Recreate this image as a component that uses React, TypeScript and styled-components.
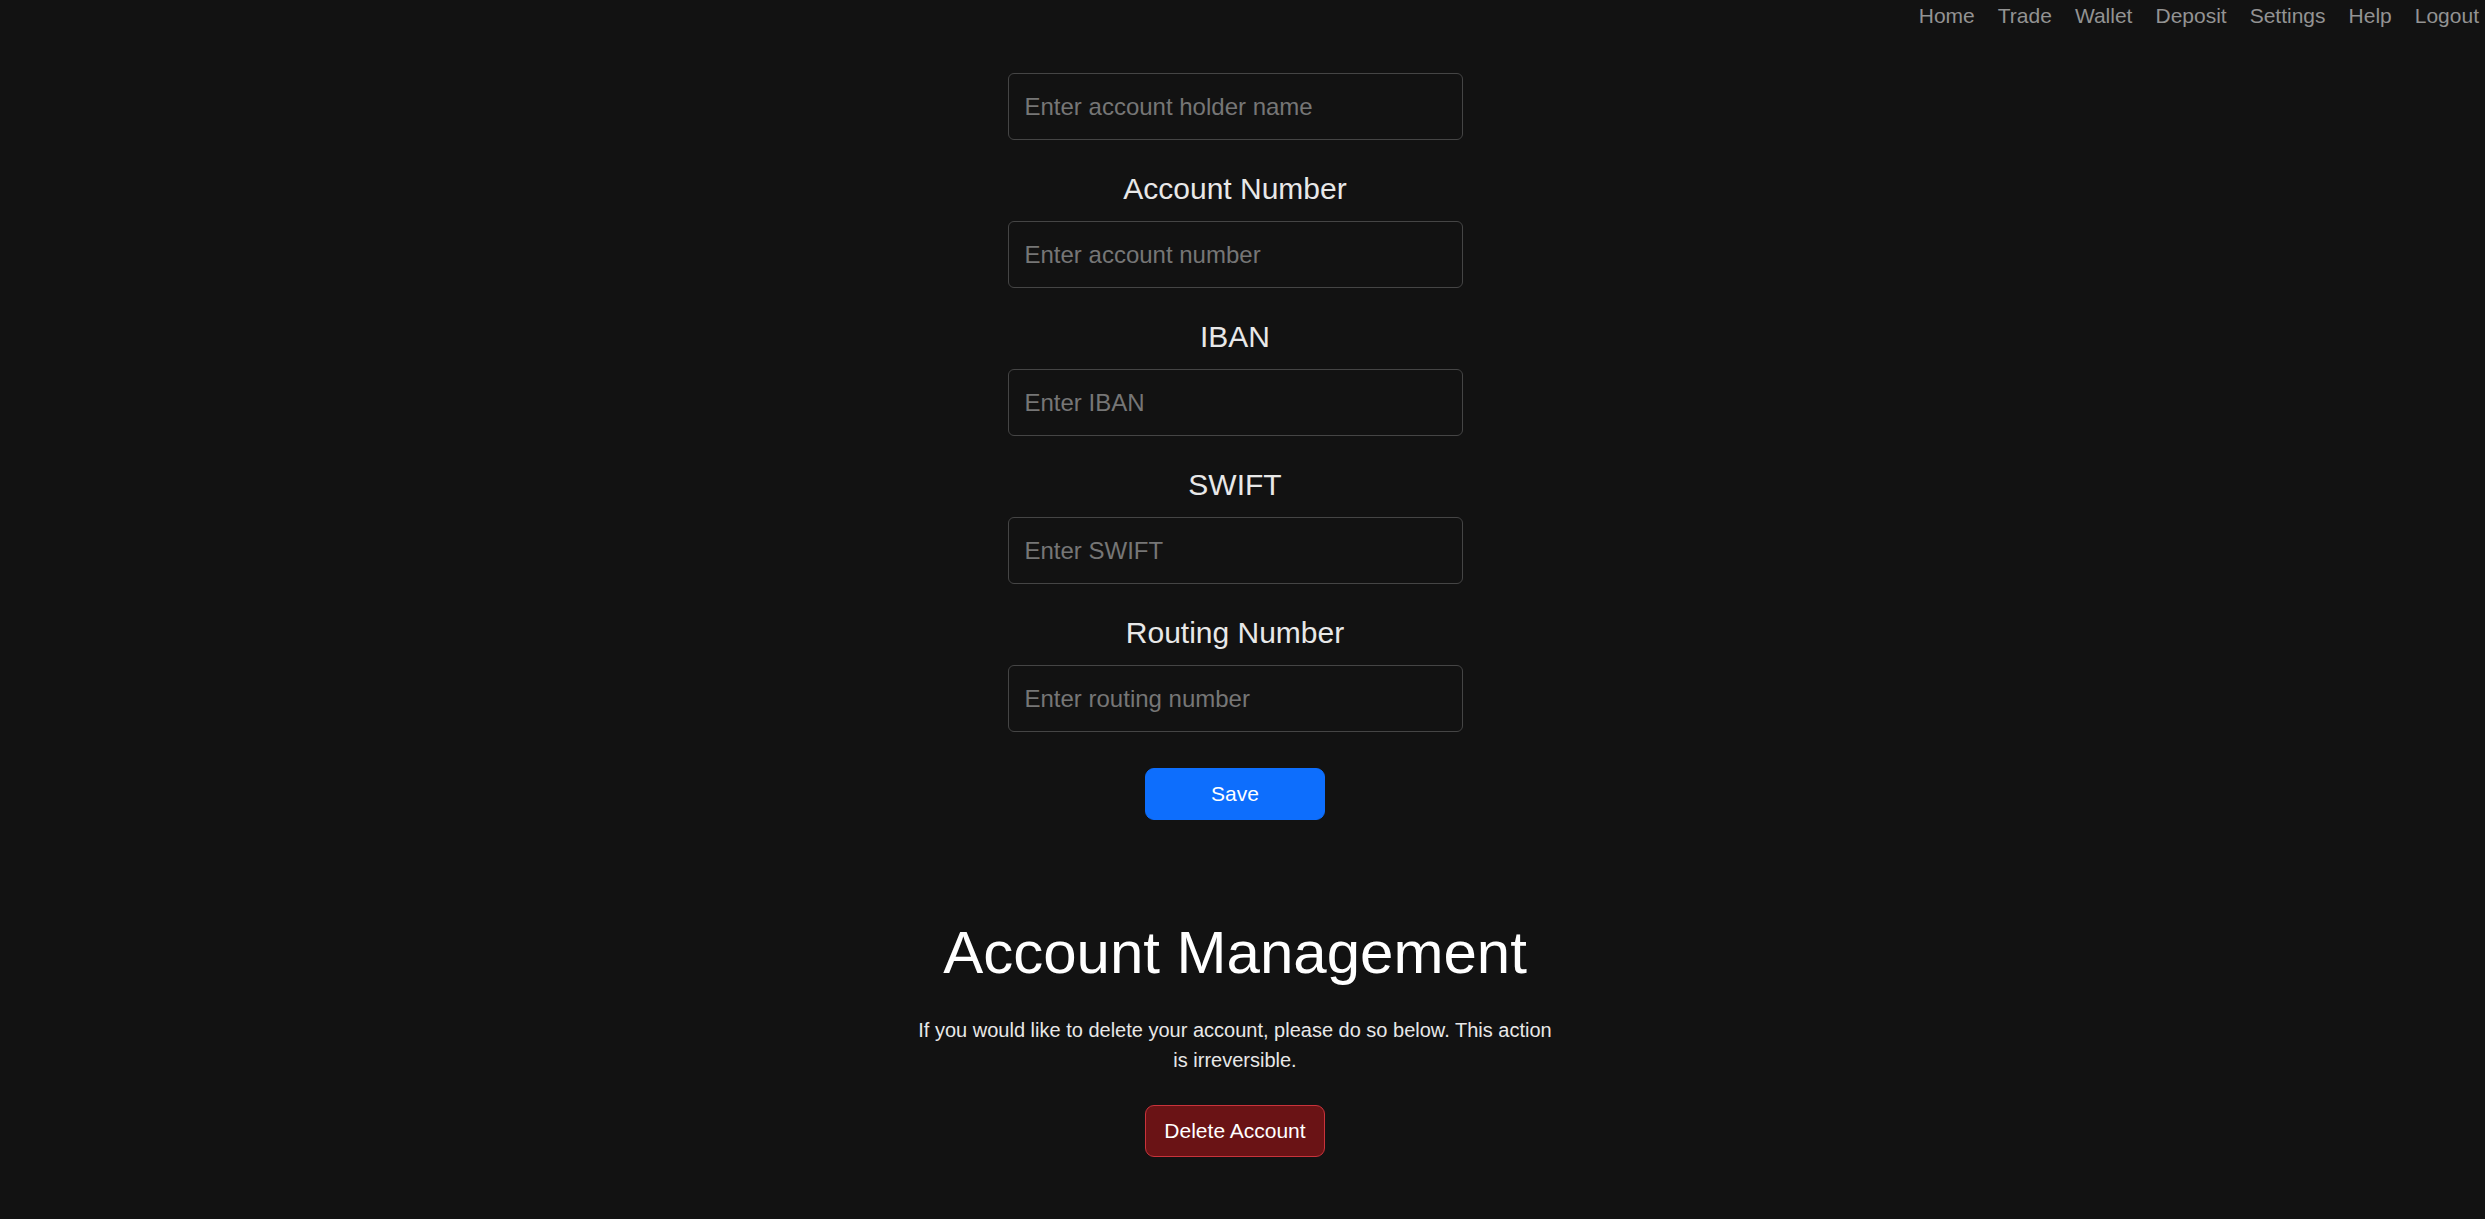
import React from "react";
import styled, { createGlobalStyle } from "styled-components";

const GlobalStyle = createGlobalStyle`
  html, body {
    margin: 0;
    padding: 0;
    background: #121212;
  }
  body {
    font-family: "Liberation Sans", Arial, sans-serif;
    color: #e6e6e6;
  }
  * { box-sizing: border-box; }
`;

const Page = styled.div`
  min-height: 1219px;
  background: #121212;
`;

const NavBar = styled.nav`
  display: flex;
  justify-content: flex-end;
  gap: 23px;
  height: 32px;
  padding-right: 6px;
`;

const NavLink = styled.a`
  font-size: 21px;
  line-height: 31.5px;
  color: #939393;
  text-decoration: none;
  cursor: pointer;
`;

const Main = styled.main`
  display: flex;
  flex-direction: column;
  align-items: center;
  padding: 41px 15px 60px 0;
`;

const Form = styled.form`
  width: 455px;
  display: flex;
  flex-direction: column;
`;

const Label = styled.label`
  display: block;
  text-align: center;
  font-size: 30px;
  line-height: 36px;
  color: #e8e8e8;
  margin: 31px 0 14px;
`;

const Input = styled.input`
  width: 100%;
  height: 67px;
  padding: 0 16px;
  background: #121212;
  border: 1px solid #454545;
  border-radius: 6px;
  font-family: "Liberation Sans", Arial, sans-serif;
  font-size: 24px;
  color: #e6e6e6;
  outline: none;
  &::placeholder {
    color: #767676;
  }
`;

const Button = styled.button<{ $variant: "primary" | "danger" }>`
  align-self: center;
  width: 180px;
  height: 52px;
  border-radius: 9px;
  font-family: "Liberation Sans", Arial, sans-serif;
  font-size: 21px;
  color: #ffffff;
  cursor: pointer;
  background: ${(p) => (p.$variant === "primary" ? "#0d6efd" : "#6a1315")};
  border: 1px solid ${(p) => (p.$variant === "primary" ? "#0d6efd" : "#c9333b")};
`;

const SaveButton = styled(Button)`
  margin-top: 36px;
`;

const Heading = styled.h1`
  margin: 97px 0 0;
  font-size: 60px;
  font-weight: 400;
  line-height: 72px;
  color: #ffffff;
`;

const Notice = styled.p`
  margin: 26px 0 0;
  max-width: 640px;
  font-size: 20px;
  line-height: 30px;
  text-align: center;
  color: #e8e8e8;
`;

const DeleteButton = styled(Button)`
  margin-top: 30px;
`;

const navItems = ["Home", "Trade", "Wallet", "Deposit", "Settings", "Help", "Logout"];

const fields = [
  { label: "Account Number", placeholder: "Enter account number" },
  { label: "IBAN", placeholder: "Enter IBAN" },
  { label: "SWIFT", placeholder: "Enter SWIFT" },
  { label: "Routing Number", placeholder: "Enter routing number" },
];

export default function App() {
  return (
    <Page>
      <GlobalStyle />
      <NavBar>
        {navItems.map((n) => (
          <NavLink key={n}>{n}</NavLink>
        ))}
      </NavBar>
      <Main>
        <Form onSubmit={(e) => e.preventDefault()}>
          <Input placeholder="Enter account holder name" />
          {fields.map((f) => (
            <React.Fragment key={f.label}>
              <Label>{f.label}</Label>
              <Input placeholder={f.placeholder} />
            </React.Fragment>
          ))}
          <SaveButton $variant="primary" type="submit">Save</SaveButton>
        </Form>
        <Heading>Account Management</Heading>
        <Notice>
          If you would like to delete your account, please do so below. This action is irreversible.
        </Notice>
        <DeleteButton $variant="danger" type="button">Delete Account</DeleteButton>
      </Main>
    </Page>
  );
}
